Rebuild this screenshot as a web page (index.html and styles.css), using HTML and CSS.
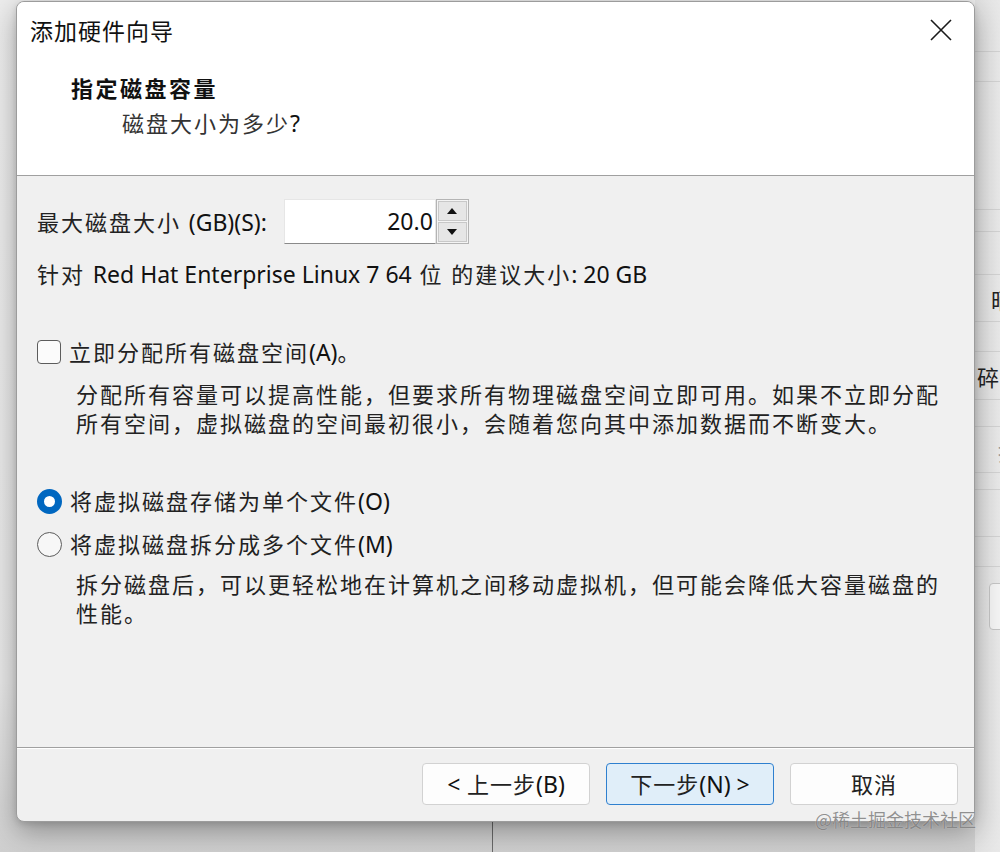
FILE: index.html
```html
<!DOCTYPE html>
<html lang="zh-CN">
<head>
  <meta charset="UTF-8" />
  <title>添加硬件向导</title>
  <link rel="stylesheet" href="styles.css">
</head>
<body>
  <!-- window behind the dialog, only its right edge shows -->
  <div class="back-window">
    <div class="back-row" style="height: 52px"></div>
    <div class="back-row" style="height: 30px"></div>
    <div class="back-row" style="height: 128px"></div>
    <div class="back-row" style="height: 22px"></div>
    <div class="back-row" style="height: 43px"></div>
    <div class="back-row back-text" style="height: 47px"><span class="c1">昞</span></div>
    <div class="back-row" style="height: 30px"></div>
    <div class="back-row back-text" style="height: 48px"><span class="c2">碎</span></div>
    <div class="back-row" style="height: 27px"></div>
    <div class="back-row back-text dim" style="height: 46px"><span class="c3">扌</span></div>
    <div class="back-row" style="height: 17px"></div>
    <div class="back-row" style="height: 47px"></div>
    <div class="back-row" style="height: 30px"></div>
    <div class="back-btn"></div>
  </div>
  <div class="back-line"></div>

  <div class="dialog">
    <div class="titlebar">
      <span class="title">添加硬件向导</span>
      <svg class="close" width="22" height="22" viewBox="0 0 22 22">
        <path d="M1 1 L21 21 M21 1 L1 21" stroke="#1a1a1a" stroke-width="1.6" fill="none" />
      </svg>
    </div>

    <div class="header">
      <div class="header-title">指定磁盘容量</div>
      <div class="header-sub">磁盘大小为多少<span class="lat">?</span></div>
    </div>

    <div class="content">
      <div class="size-row">
        <label class="txt">最大磁盘大小 <span class="lat">(GB)(S):</span></label>
        <div class="spinner">
          <div class="spin-value">20.0</div>
          <div class="spin-buttons">
            <div class="spin-btn"><span class="tri-up"></span></div>
            <div class="spin-btn"><span class="tri-down"></span></div>
          </div>
        </div>
      </div>

      <p class="txt recommend">针对 <span class="lat">Red Hat Enterprise Linux 7 64</span> 位 的建议大小<span class="lat">: 20 GB</span></p>

      <div class="option check-row">
        <span class="checkbox"></span>
        <span class="txt">立即分配所有磁盘空间<span class="lat">(A)</span>。</span>
      </div>
      <p class="txt desc desc-alloc">分配所有容量可以提高性能，但要求所有物理磁盘空间立即可用。如果不立即分配<br>所有空间，虚拟磁盘的空间最初很小，会随着您向其中添加数据而不断变大。</p>

      <div class="option radio-first">
        <span class="radio checked"></span>
        <span class="txt">将虚拟磁盘存储为单个文件<span class="lat">(O)</span></span>
      </div>
      <div class="option radio-second">
        <span class="radio"></span>
        <span class="txt">将虚拟磁盘拆分成多个文件<span class="lat">(M)</span></span>
      </div>
      <p class="txt desc desc-split">拆分磁盘后，可以更轻松地在计算机之间移动虚拟机，但可能会降低大容量磁盘的<br>性能。</p>
    </div>

    <div class="footer">
      <button class="btn txt"><span class="lat">&lt;</span> 上一步<span class="lat">(B)</span></button>
      <button class="btn btn-primary txt">下一步<span class="lat">(N) &gt;</span></button>
      <button class="btn txt">取消</button>
    </div>
  </div>

  <div class="watermark">@稀土掘金技术社区</div>
</body>
</html>
```

FILE: styles.css
```css
:root {
  --dialog-bg: #f0f0f0;
  --line: #a0a0a0;
  --text: #1a1a1a;
  --accent: #0067c0;
}

* {
  margin: 0;
  padding: 0;
  box-sizing: border-box;
}

body {
  width: 1000px;
  height: 852px;
  overflow: hidden;
  position: relative;
  background: linear-gradient(to bottom, #ececec 0%, #e6e6e6 80%, #cfcfcf 100%);
  font-family: "Noto Sans", "Noto Sans CJK SC", sans-serif;
  color: var(--text);
}

/* background window */
.back-window {
  position: absolute;
  left: 975px;
  top: 0;
  width: 40px;
  height: 852px;
  background: linear-gradient(to right, #e2e2e2, #ececec);
}

.back-row {
  border-bottom: 1px solid #d2d2d2;
  position: relative;
  font-family: "Noto Sans CJK SC", sans-serif;
  font-size: 22px;
  color: #222;
}

.back-text span {
  position: absolute;
  top: 8px;
}

.back-text .c1 { left: 16px; }
.back-text .c2 { left: 2px; }
.back-text .c3 { left: 22px; }
.back-text.dim { color: #9a9a9a; }

.back-btn {
  margin: 16px 0 0 14px;
  width: 40px;
  height: 47px;
  border: 1px solid #c4c4c4;
  border-radius: 4px;
  background: #f4f4f4;
}

.back-line {
  position: absolute;
  left: 492px;
  top: 822px;
  width: 1px;
  height: 30px;
  background: #6a6a6a;
}

/* dialog window */
.dialog {
  position: absolute;
  left: 16px;
  top: 1px;
  width: 959px;
  height: 821px;
  display: flex;
  flex-direction: column;
  background: var(--dialog-bg);
  border: 1px solid #9c9c9c;
  border-radius: 8px;
  overflow: hidden;
  box-shadow: 0 10px 28px rgba(0, 0, 0, 0.32), 0 2px 6px rgba(0, 0, 0, 0.12);
}

.titlebar {
  height: 55px;
  background: #fff;
  display: flex;
  align-items: center;
  justify-content: space-between;
  padding: 0 22px 0 13px;
}

.title {
  font-family: "Noto Sans CJK SC", sans-serif;
  font-size: 23px;
  letter-spacing: 1px;
  color: #111;
}

.close {
  margin-top: 1px;
}

.header {
  height: 119px;
  background: #fff;
  border-bottom: 1px solid var(--line);
  padding: 15px 0 0 54px;
}

.header-title {
  font-family: "Noto Sans CJK SC", sans-serif;
  font-weight: 700;
  font-size: 22px;
  letter-spacing: 2.5px;
  line-height: 30px;
  color: #111;
}

.header-sub {
  margin: 6px 0 0 51px;
  font-size: 22px;
  letter-spacing: 2px;
  line-height: 30px;
  color: #333;
}

.txt {
  font-size: 22px;
  letter-spacing: 2px;
  line-height: 30px;
  color: #222;
}

.lat {
  font-family: "Noto Sans", sans-serif;
  font-size: 23px;
  letter-spacing: 0;
  color: #111;
}

.content {
  flex: 1;
  padding: 23px 0 0 20px;
  border-bottom: 1px solid var(--line);
  box-shadow: 0 1px 0 #fff;
}

.size-row {
  display: flex;
  align-items: center;
  gap: 17px;
}

.spinner {
  display: flex;
  height: 45px;
}

.spin-value {
  width: 152px;
  background: #fff;
  border: 1px solid #e6e6e6;
  border-bottom-color: #8a8a8a;
  text-align: right;
  padding-right: 2px;
  font-size: 23px;
  line-height: 43px;
  color: #111;
}

.spin-buttons {
  width: 33px;
  display: flex;
  flex-direction: column;
  border: 1px solid #b4b4b4;
  background: #f4f4f4;
  padding: 1px;
  gap: 1px;
}

.spin-btn {
  flex: 1;
  background: #e6e6e6;
  border: 1px solid #c8c8c8;
  display: flex;
  align-items: center;
  justify-content: center;
}

.tri-up {
  border-left: 5px solid transparent;
  border-right: 5px solid transparent;
  border-bottom: 6px solid #111;
}

.tri-down {
  border-left: 5px solid transparent;
  border-right: 5px solid transparent;
  border-top: 6px solid #111;
}

.recommend {
  margin-top: 15px;
}

.option {
  display: flex;
  align-items: center;
  gap: 8px;
}

.check-row {
  margin-top: 48px;
}

.checkbox {
  width: 24px;
  height: 24px;
  border: 1.5px solid #5c5c5c;
  border-radius: 4px;
  background: #fbfbfb;
}

.desc {
  padding-left: 39px;
  line-height: 29px;
  white-space: nowrap;
}

.desc-alloc {
  margin-top: 13px;
}

.radio-first {
  margin-top: 48px;
}

.radio-second {
  margin-top: 13px;
}

.radio {
  width: 25px;
  height: 25px;
  border-radius: 50%;
  border: 1.5px solid #5c5c5c;
  background: #f7f7f7;
}

.radio.checked {
  border: 7px solid var(--accent);
  background: #fff;
}

.desc-split {
  margin-top: 11px;
}

.footer {
  height: 73px;
  display: flex;
  justify-content: flex-end;
  align-items: flex-start;
  gap: 16px;
  padding: 15px 16px 0 0;
}

.btn {
  width: 168px;
  height: 42px;
  background: #fdfdfd;
  border: 1px solid #d2d2d2;
  border-radius: 4px;
  font-family: "Noto Sans", "Noto Sans CJK SC", sans-serif;
  letter-spacing: 1px;
}

.btn-primary {
  background: #e0eef9;
  border-color: #2f80cf;
}

.watermark {
  position: absolute;
  left: 815px;
  top: 806px;
  font-family: "Noto Sans CJK SC", sans-serif;
  font-size: 18px;
  color: rgba(110, 110, 110, 0.75);
  text-shadow: 0 0 1px rgba(255, 255, 255, 0.6);
}
```
